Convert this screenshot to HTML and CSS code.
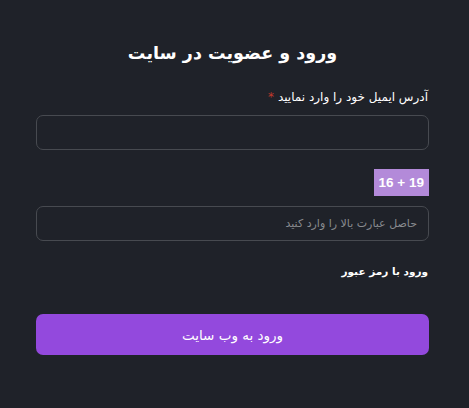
FILE: index.html
```html
<!DOCTYPE html>
<html lang="fa" dir="rtl">
<head>
    <meta charset="UTF-8">
    <meta name="viewport" content="width=device-width, initial-scale=1.0">
    <title>ورود و عضویت</title>
    <link rel="stylesheet" href="styles.css">
</head>
<body>
    <div class="login-box">
        <h1 class="title">ورود و عضویت در سایت</h1>

        <label class="label" for="email">آدرس ایمیل خود را وارد نمایید <span class="req">*</span></label>
        <input class="field" id="email" type="text">

        <div class="captcha-row">
            <span class="captcha">16 + 19</span>
        </div>
        <input class="field" type="text" placeholder="حاصل عبارت بالا را وارد کنید">

        <a class="pass-link" href="#">ورود با رمز عبور</a>

        <button class="submit">ورود به وب سایت</button>
    </div>
</body>
</html>
```

FILE: styles.css
```css
body {
    margin: 0;
    background-color: #1f2229;
    font-family: 'DejaVu Sans', sans-serif;
    color: #fff;
}

.login-box {
    width: 393px;
    margin: 0 40px 0 0;
    padding-top: 38px;
    display: flex;
    flex-direction: column;
}

.title {
    font-size: 17.5px;
    font-weight: bold;
    text-align: center;
    margin: 0 0 20px 0;
    line-height: 30px;
}

.label {
    font-size: 12px;
    line-height: 18px;
    margin-bottom: 9px;
    padding-right: 1px;
}

.req {
    color: #c0392b;
}

.field {
    height: 35px;
    box-sizing: border-box;
    background: transparent;
    border: 1px solid #474a50;
    border-radius: 7px;
    color: #fff;
    font-family: 'DejaVu Sans', sans-serif;
    font-size: 11px;
    padding: 0 11px;
    outline: none;
}

.field::placeholder {
    color: #8a8c90;
}

.captcha-row {
    display: flex;
    margin: 19px 0 10px 0;
}

.captcha {
    background-color: #b38ad9;
    color: #fff;
    font-family: 'Liberation Sans', sans-serif;
    font-weight: bold;
    font-size: 13.5px;
    padding: 5px 5px;
    line-height: 17px;
    direction: ltr;
}

.pass-link {
    color: #fff;
    text-decoration: none;
    font-size: 10.5px;
    font-weight: 600;
    margin: 21px 0 0 0;
    line-height: 18px;
    padding-right: 1px;
    align-self: flex-start;
}

.submit {
    margin-top: 34px;
    height: 41px;
    border: none;
    border-radius: 7px;
    background-color: #9349dd;
    color: #fff;
    font-family: 'DejaVu Sans', sans-serif;
    font-size: 13.5px;
    cursor: pointer;
}
```
